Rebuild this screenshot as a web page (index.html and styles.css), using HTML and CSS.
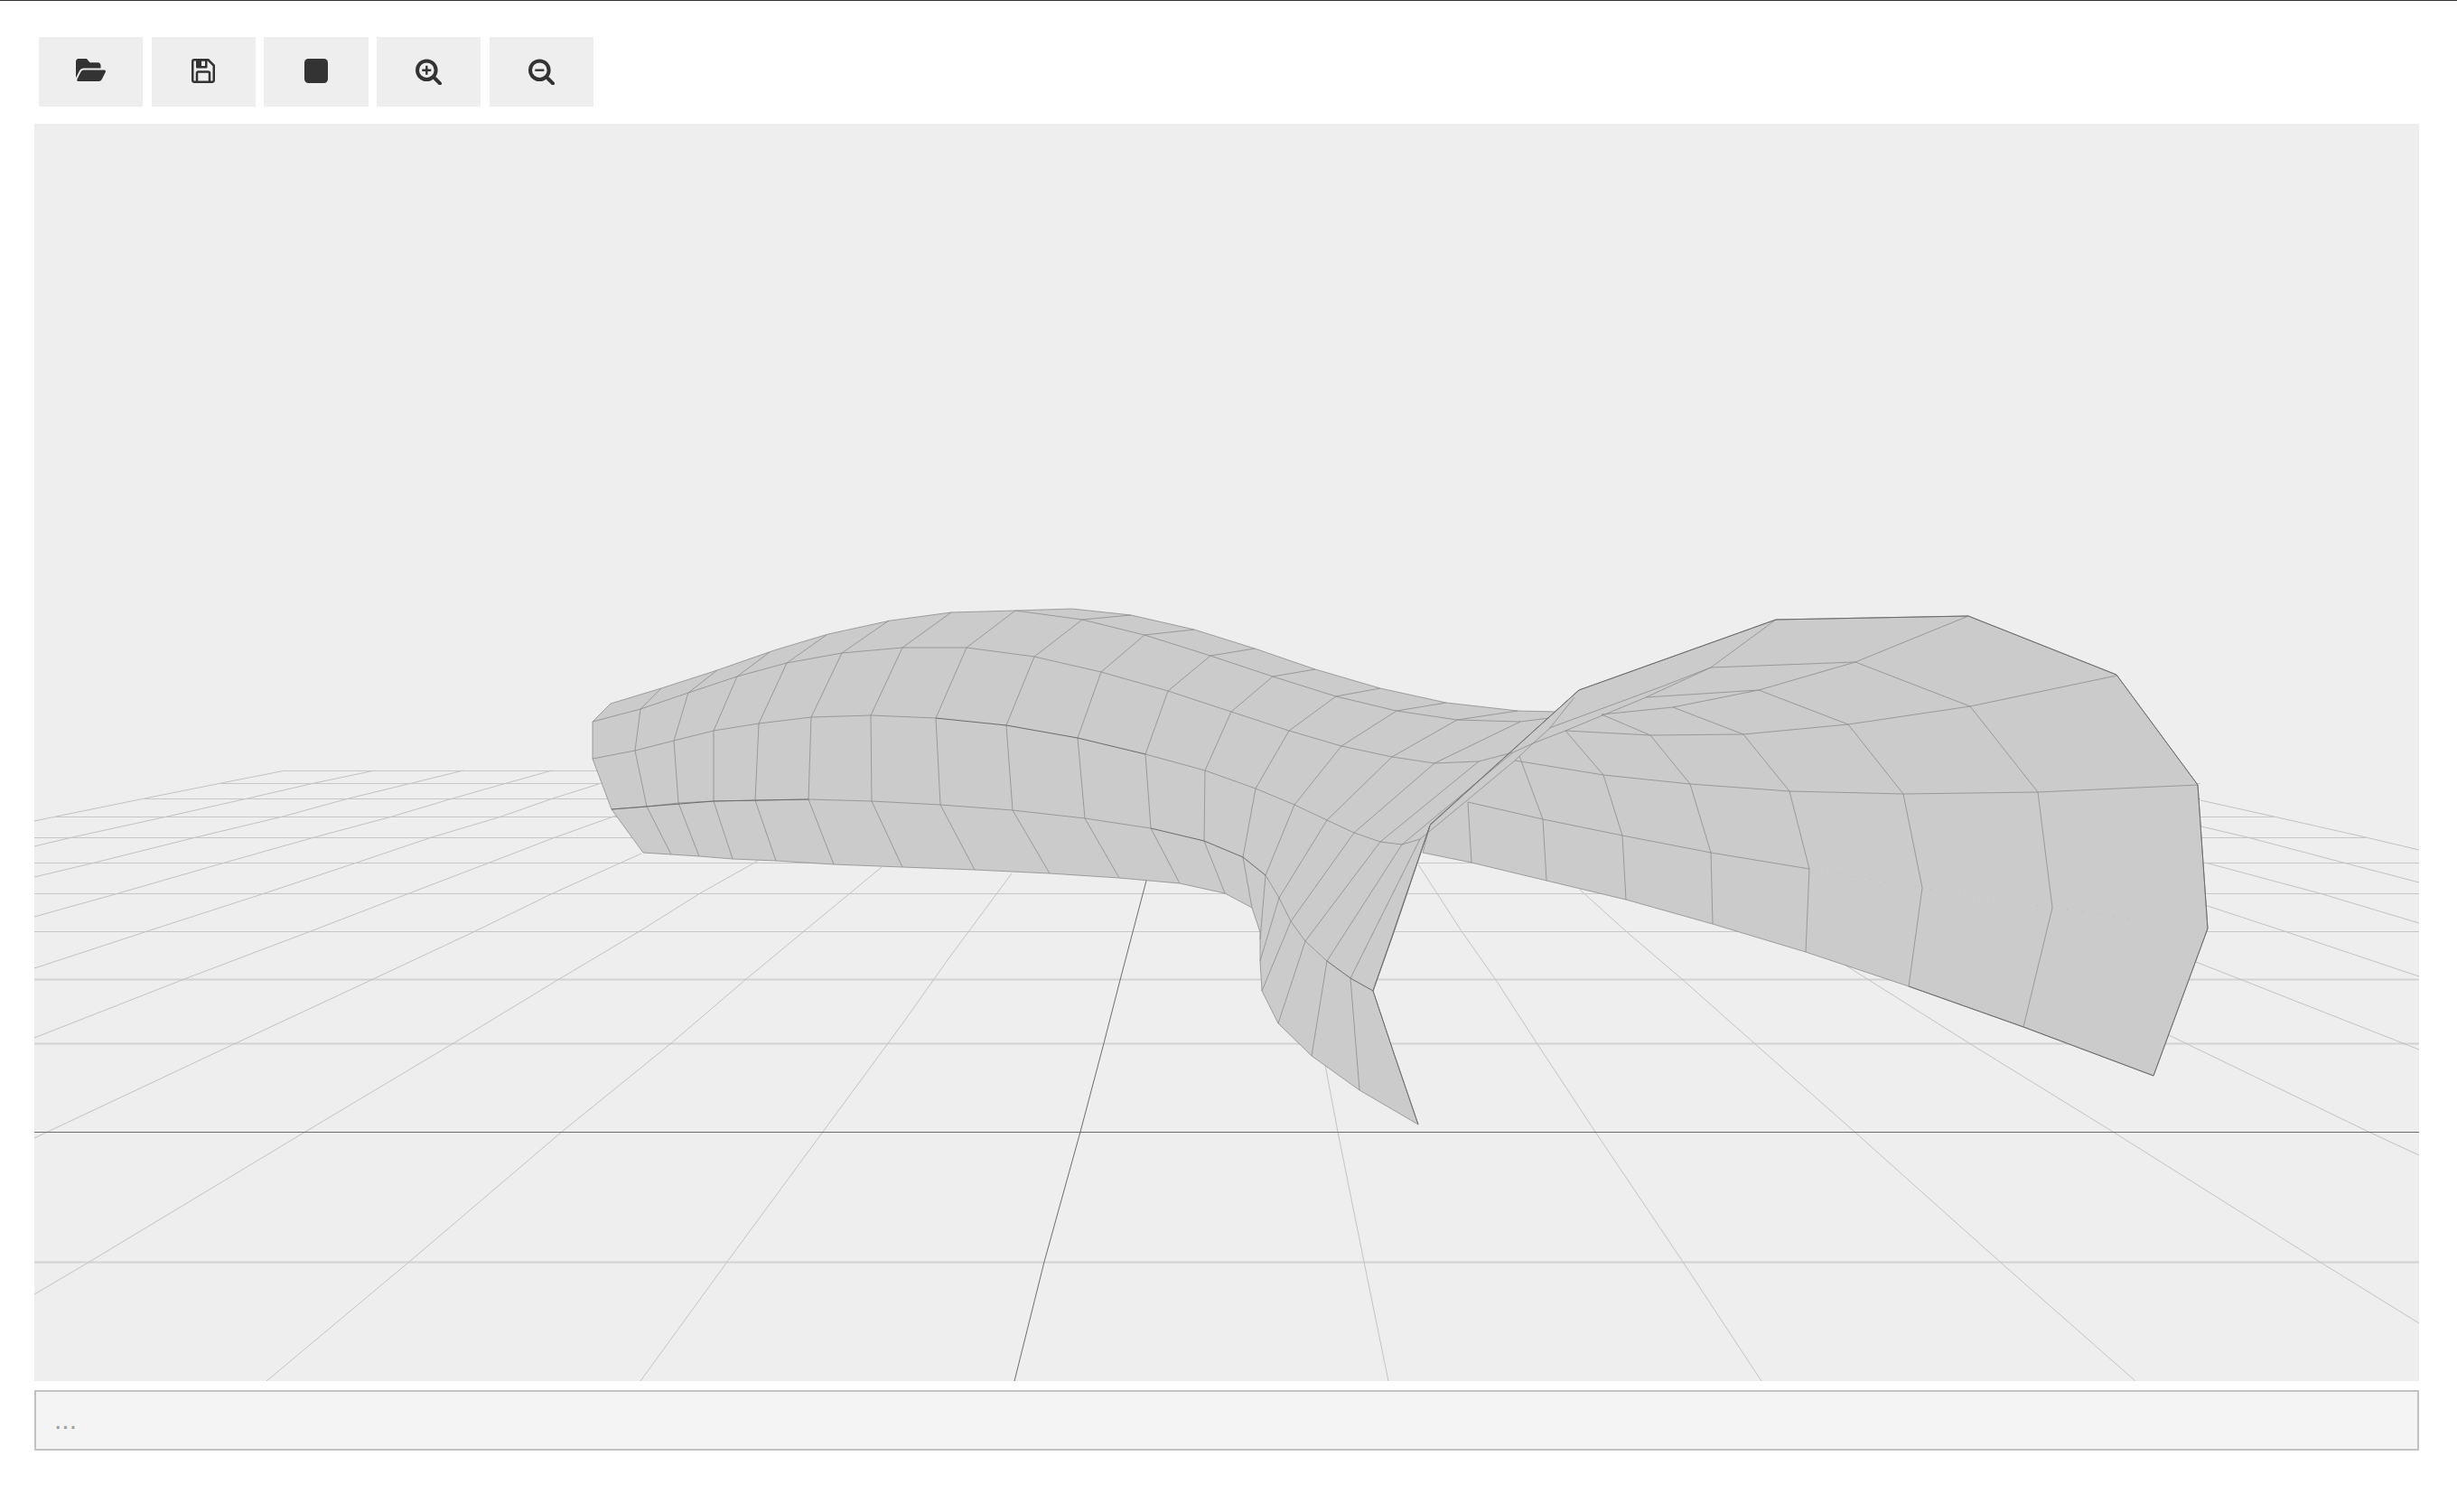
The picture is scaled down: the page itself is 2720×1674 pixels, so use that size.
FILE: index.html
```html
<!DOCTYPE html>
<html lang="en">
<head>
<meta charset="utf-8">
<title>Surface viewer</title>
<link rel="stylesheet" href="styles.css">
</head>
<body>
<div class="app">
  <div class="toolbar">
    <button class="tool" type="button" aria-label="Open">
      <svg class="icon icon-open" viewBox="0 64 576 384" preserveAspectRatio="none"><path d="M572.694 292.093L500.27 416.248A63.997 63.997 0 0 1 444.989 448H45.025c-18.523 0-30.064-20.093-20.731-36.093l72.424-124.155A64 64 0 0 1 152 256h399.964c18.523 0 30.064 20.093 20.73 36.093zM152 224h328v-48c0-26.51-21.49-48-48-48H272l-64-64H48C21.49 64 0 85.49 0 112v278.046l69.077-118.418C86.214 242.25 117.989 224 152 224z"/></svg>
    </button>
    <button class="tool" type="button" aria-label="Save">
      <svg class="icon icon-save" viewBox="0 0 26 27">
        <path class="ink-line" d="M3 1.25H18.5L24.75 7.5V24a1.75 1.75 0 0 1-1.75 1.75H3A1.75 1.75 0 0 1 1.25 24V3A1.75 1.75 0 0 1 3 1.25Z"/>
        <path fill-rule="evenodd" d="M5 1.5H17.5V9.5a1 1 0 0 1-1 1H6a1 1 0 0 1-1-1ZM11 2.5V8H15V2.5Z"/>
        <path class="ink-line" d="M6 25V16a1.5 1.5 0 0 1 1.5-1.5H18.5A1.5 1.5 0 0 1 20 16V25"/>
      </svg>
    </button>
    <button class="tool" type="button" aria-label="Stop">
      <svg class="icon icon-stop" viewBox="0 0 26 27"><rect width="26" height="27" rx="4.5"/></svg>
    </button>
    <button class="tool" type="button" aria-label="Zoom in">
      <svg class="icon icon-zoom" viewBox="0 0 29 29">
        <circle class="ink-ring" cx="12.3" cy="12.7" r="10.3"/>
        <path class="ink-thin" d="M12.3 7.7V17.7M7.3 12.7H17.3"/>
        <path class="ink-handle" d="M21.7 22L27 27.3"/>
      </svg>
    </button>
    <button class="tool" type="button" aria-label="Zoom out">
      <svg class="icon icon-zoom" viewBox="0 0 29 29">
        <circle class="ink-ring" cx="12.3" cy="12.7" r="10.3"/>
        <path class="ink-thin" d="M7.3 12.7H17.3"/>
        <path class="ink-handle" d="M21.7 22L27 27.3"/>
      </svg>
    </button>
  </div>

  <div class="viewer">
    <svg class="scene" viewBox="38 137 2640 1392" preserveAspectRatio="none">
      <g class="floor-h">
        <path d="M316 853.5H2400M245 867.5H2436M160 884.5H2436M62 904.5H2517M38 927.5H2619M38 955.5H2678M38 989.5H2678M38 1031.5H2678"/>
      </g>
      <g class="floor-h-wide">
        <path d="M38 1084.5H2678M38 1155.5H2678M38 1397.5H2678"/>
      </g>
      <g class="floor-d">
        <path d="M38 1433L99 1397L338 1253L502 1155L619 1084L708 1031L775 989L839 953"/>
        <path d="M38 1260L261 1155L413 1084L526 1031L612 989L710 945"/>
        <path d="M38 1149L204 1084L344 1031L453 989L542 955L612 928L682 903"/>
        <path d="M38 1072L163 1031L293 989L395 955L478 927L555 904L612 884L663 868"/>
        <path d="M38 1015L131 989L249 955L348 927L434 904L501 884L561 867L611 853"/>
        <path d="M38 971L105 955L217 927L313 904L386 884L456 867L513 853"/>
        <path d="M38 937L80 927L185 904L274 884L348 867L415 853"/>
        <path d="M38 909L62 904L160 884L245 867L316 853"/>
        <path d="M295 1529L453 1397L622 1253L743 1155L826 1084L890 1031L941 989L976 960"/>
        <path d="M709 1529L805 1397L911 1253L1000 1132L1051 1060L1120 967"/>
        <path d="M1537 1529L1510 1397L1481 1253L1467 1179"/>
        <path d="M1950 1529L1863 1397L1766 1253L1700 1153L1656 1085L1618 1031L1570 957"/>
        <path d="M2364 1529L2214 1397L2053 1253L1942 1155L1862 1084L1800 1031L1749 985"/>
        <path d="M2678 1465L2568 1397L2339 1253L2180 1155L2042 1068L1950 1010"/>
        <path d="M2678 1279L2622 1253L2401 1146L2350 1120"/>
        <path d="M2678 1162L2431 1065"/>
        <path d="M2678 1081L2529 1031L2441 1002"/>
        <path d="M2678 1022L2568 989L2441 955"/>
        <path d="M2678 977L2594 955L2488 927L2437 915"/>
        <path d="M2678 941L2619 927L2517 904L2436 886"/>
      </g>
      <g class="floor-axis">
        <path d="M1123 1529L1156 1397L1196 1253L1222 1155L1240 1085L1269 975"/>
        <path d="M38 1253.5H2678"/>
      </g>

      <g class="surface">
        <path d="M656 799L676 779L732 762L794 742L857 720L917 702L986 687L1053 678L1124 676L1187 674L1252 681L1322 697L1389 718L1456 741L1528 762L1601 778L1680 787L1723 788L1748 764L1583 914L1543 1032L1520 1097L1543 1166L1570 1245L1505 1207L1452 1169L1415 1133L1397 1097L1395 1064L1395 1032L1386 1005L1356 989L1306 978L1239 972L1162 967L1079 963L999 960L923 957L859 953L811 951L774 948L743 946L712 944L677 896L656 840Z"/>
        <path d="M1748 764L1966 686L2179 682L2343 747L2433 869L2444 1028L2384 1191L2240 1137L2113 1092L1999 1054L1896 1023L1800 996L1712 975L1629 955L1575 944L1583 914Z"/>
      </g>

      <g class="mesh">
        <path d="M1124 676L1198 686L1267 703L1340 726L1409 749L1479 771L1546 787L1613 797L1683 799L1715 795"/>
        <path d="M1198 686L1252 681M1267 703L1322 697M1340 726L1389 718M1409 749L1456 741M1479 771L1528 762M1546 787L1601 778M1613 797L1680 787"/>
        <path d="M656 799L709 785L762 767L816 749L871 734L932 723L999 717L1070 717L1145 727L1219 744L1293 765L1363 788L1427 809L1485 826L1541 838L1588 845L1637 843L1675 833L1697 823"/>
        <path d="M709 785L732 762M762 767L794 742M816 749L852 722M871 734L915 703M932 723L984 687M999 717L1053 678M1070 717L1124 676M1145 727L1198 686M1219 744L1267 703M1293 765L1340 726M1363 788L1409 749M1427 809L1479 771M1485 826L1546 787M1541 838L1613 797M1588 845L1683 799"/>
        <path d="M656 840L703 831L746 820L790 809L840 801L898 794L964 792L1036 795"/>
        <path d="M709 785L703 831L716 893L743 946M762 767L746 820L751 889L774 948M816 749L790 809L790 887L811 951M871 734L840 801L836 886L859 953M932 723L898 794L895 885L923 957M999 717L964 792L965 887L999 960M1070 717L1036 795L1041 891L1079 963M1145 727L1114 803L1121 897L1162 967M1219 744L1193 817L1201 906L1239 972M1293 765L1268 835L1274 917L1306 978"/>
        <path d="M1334 853L1363 788M1390 873L1427 809M1433 891L1485 826M1469 908L1541 838M1499 922L1588 845M1528 932L1637 843M1552 935L1675 833"/>
        <path d="M1268 835L1334 853L1390 873L1433 891L1469 908L1499 922L1528 932L1552 935L1572 929L1583 920"/>
        <path d="M677 896L716 893L751 889L790 887L836 886L895 885L965 887L1041 891L1121 897L1201 906L1274 917"/>
        <path d="M1401 969L1416 994L1429 1020L1445 1042L1469 1064"/>
        <path d="M1333 931L1334 853M1376 949L1390 873M1401 969L1433 891M1416 994L1469 908M1429 1020L1499 922M1445 1042L1528 932M1469 1064L1552 935M1495 1083L1572 929M1520 1097L1583 914"/>
        <path d="M1333 931L1356 989M1376 949L1386 1005M1401 969L1395 1040M1416 994L1395 1064M1429 1020L1397 1097M1445 1042L1415 1133M1469 1064L1452 1169M1495 1083L1505 1207"/>
        <path d="M1743 772L1715 807L1697 823L1677 842L1623 887L1583 920"/>
        <path d="M1715 806L1840 760L1894 739L1966 686"/>
        <path d="M1697 823L1733 809L1820 773L1894 739L2054 733L2179 682"/>
        <path d="M1822 772L1947 764L2054 733M1773 791L1852 783L1947 764"/>
        <path d="M1733 809L1827 814L1930 813L2046 802L2181 782L2343 748"/>
        <path d="M1773 791L1827 814M1852 783L1930 813M1947 764L2046 802M2054 733L2181 782"/>
        <path d="M1733 809L1775 858M1827 814L1871 868M1930 813L1981 876M2046 802L2107 879M2181 782L2256 877"/>
        <path d="M1677 842L1775 858L1871 868L1981 876L2107 879L2256 877L2433 869"/>
        <path d="M1682 837L1708 907M1775 858L1796 925M1871 868L1894 944M1981 876L2003 962M2107 879L2128 983M2256 877L2272 1005"/>
        <path d="M1625 888L1708 907L1796 925L1894 944L2003 962"/>
        <path d="M1625 888L1629 955M1708 907L1712 975M1796 925L1800 996M1894 944L1896 1023M2003 962L1999 1054M2128 983L2113 1092M2272 1005L2240 1137"/>
      </g>
      <g class="mesh-dark">
        <path d="M1036 795L1114 803L1193 817L1268 835"/>
        <path d="M677 896L790 887L895 885"/>
        <path d="M1274 917L1333 931L1376 949L1401 969"/>
        <path d="M1583 913L1748 764L1966 686L2179 682L2343 747L2433 869L2444 1028L2384 1191L2240 1137L2113 1092"/>
        <path d="M1583 914L1543 1032L1520 1097L1543 1166L1570 1245"/>
        <path d="M1469 1064L1495 1083L1520 1097"/>
      </g>
      <path class="mesh-faint" d="M2003 962L2128 983L2272 1005L2407 1024"/>
    </svg>
  </div>

  <div class="status"><span class="status-text">...</span></div>
</div>
</body>
</html>
```

FILE: styles.css
```css
html, body {
  margin: 0;
  padding: 0;
  background: #ffffff;
}

.app {
  display: flex;
  flex-direction: column;
  height: 1674px;
  border-top: 1px solid #333333;
  box-sizing: border-box;
  padding: 0 42px 0 38px;
}

.toolbar {
  display: flex;
  gap: 9.5px;
  margin: 40px 0 19px 5px;
}

.tool {
  display: flex;
  justify-content: center;
  align-items: flex-start;
  width: 115.2px;
  height: 77px;
  padding: 24px 0 0;
  border: 0;
  background: #eeeeee;
}

.icon {
  display: block;
  fill: #333333;
}

.icon-open { width: 33px; height: 25px; }
.icon-save { width: 26px; height: 27px; }
.icon-stop { width: 26px; height: 27px; }
.icon-zoom { width: 29px; height: 29px; }

.ink-line { fill: none; stroke: #333333; stroke-width: 2.5; }
.ink-ring { fill: none; stroke: #333333; stroke-width: 4; }
.ink-thin { fill: none; stroke: #333333; stroke-width: 2.4; }
.ink-handle { fill: none; stroke: #333333; stroke-width: 4; stroke-linecap: round; }

.viewer {
  height: 1392px;
  background: #eeeeee;
}

.scene {
  display: block;
  width: 100%;
  height: 100%;
}

.scene path {
  fill: none;
}

.floor-h path { stroke: #c6c6c6; stroke-width: 1; }
.floor-h-wide path { stroke: #d2d2d2; stroke-width: 2; }
.floor-d path { stroke: #c2c2c2; stroke-width: 1; }
.floor-axis path { stroke: #6c6c6c; stroke-width: 1; }

.scene .surface path { fill: #cbcbcb; stroke: #8c8c8c; stroke-width: 0.8; }
.mesh path { stroke: #8c8c8c; stroke-width: 0.8; }
.mesh-dark path { stroke: #6b6b6b; stroke-width: 1; }
.scene .mesh-faint { stroke: #a8a8a8; stroke-width: 0.6; stroke-dasharray: 1 16; }

.status {
  box-sizing: border-box;
  height: 67px;
  margin-top: 10px;
  padding: 9px 20px 0;
  background: #f4f4f4;
  border: 2px solid #c2c2c2;
  font: 30px/44px "Liberation Sans", Arial, sans-serif;
}

.status-text {
  color: #a0a0a0;
}
```
